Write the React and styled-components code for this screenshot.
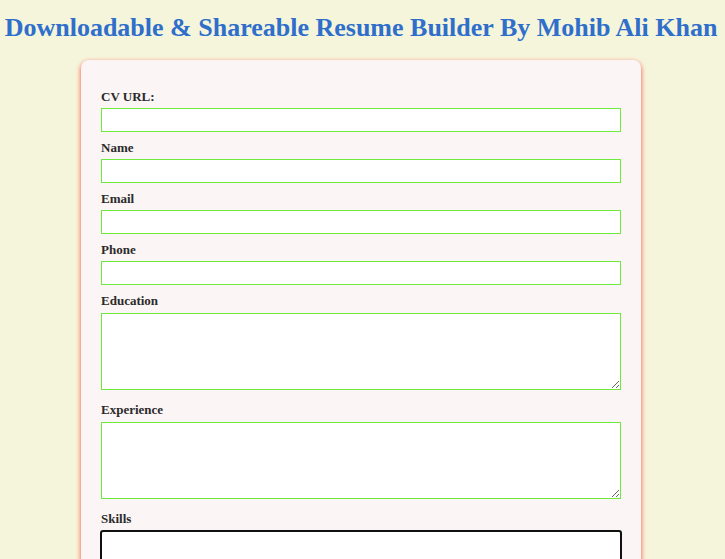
import React, { useEffect, useRef } from "react";
import styled, { createGlobalStyle } from "styled-components";

const GlobalStyle = createGlobalStyle`
  * { box-sizing: border-box; }
  html { scrollbar-width: none; }
  body {
    margin: 0;
    background: #f5f5dc;
    color: #2b2b2b;
    font-family: "Liberation Serif", "Times New Roman", serif;
  }
`;

const Page = styled.main`
  padding: 13px 3px 20px 0;
`;

const Title = styled.h1`
  margin: 0 0 17px;
  color: #2f6fcb;
  font-size: 26px;
  line-height: 30px;
  text-align: center;
`;

const Form = styled.form`
  width: calc(100% - 40px);
  max-width: 560px;
  margin: 0 auto;
  padding: 28px 20px;
  border-radius: 8px;
  background: #fbf5f5;
  box-shadow: 0 2px 5px #ff4537;
`;

const Field = styled.div`
  display: flex;
  flex-direction: column;
  gap: ${(p) => (p.$tall ? "4px" : "3px")};
  margin-bottom: ${(p) => (p.$tall ? "11px" : "7px")};
`;

const Label = styled.label`
  font-size: 13px;
  font-weight: bold;
  line-height: 17px;
`;

const Input = styled.input`
  width: 100%;
  height: 24px;
  padding: 2px 4px;
  border: 1px solid #6eea3c;
  background: #fff;
  font: inherit;
  font-size: 13px;
`;

const TextArea = styled.textarea`
  display: block;
  width: 100%;
  height: 77px;
  padding: 4px;
  border: 1px solid #6eea3c;
  background: #fff;
  font: inherit;
  font-size: 13px;
  resize: vertical;

  &:focus {
    border-radius: 2px;
    outline: 2px solid #101010;
    outline-offset: -1px;
  }
`;

const fields = [
  { id: "url", label: "CV URL:", type: "text" },
  { id: "name", label: "Name", type: "text" },
  { id: "email", label: "Email", type: "email" },
  { id: "phone", label: "Phone", type: "tel" },
  { id: "education", label: "Education" },
  { id: "experience", label: "Experience" },
  { id: "skills", label: "Skills", focused: true },
];

export default function App() {
  const focusedRef = useRef(null);

  useEffect(() => {
    focusedRef.current?.focus({ preventScroll: true });
  }, []);

  return (
    <Page>
      <GlobalStyle />
      <Title>Downloadable &amp; Shareable Resume Builder By Mohib Ali Khan</Title>
      <Form>
        {fields.map(({ id, label, type, focused }) => (
          <Field key={id} $tall={!type}>
            <Label htmlFor={id}>{label}</Label>
            {type ? (
              <Input id={id} name={id} type={type} />
            ) : (
              <TextArea id={id} name={id} ref={focused ? focusedRef : undefined} />
            )}
          </Field>
        ))}
      </Form>
    </Page>
  );
}
